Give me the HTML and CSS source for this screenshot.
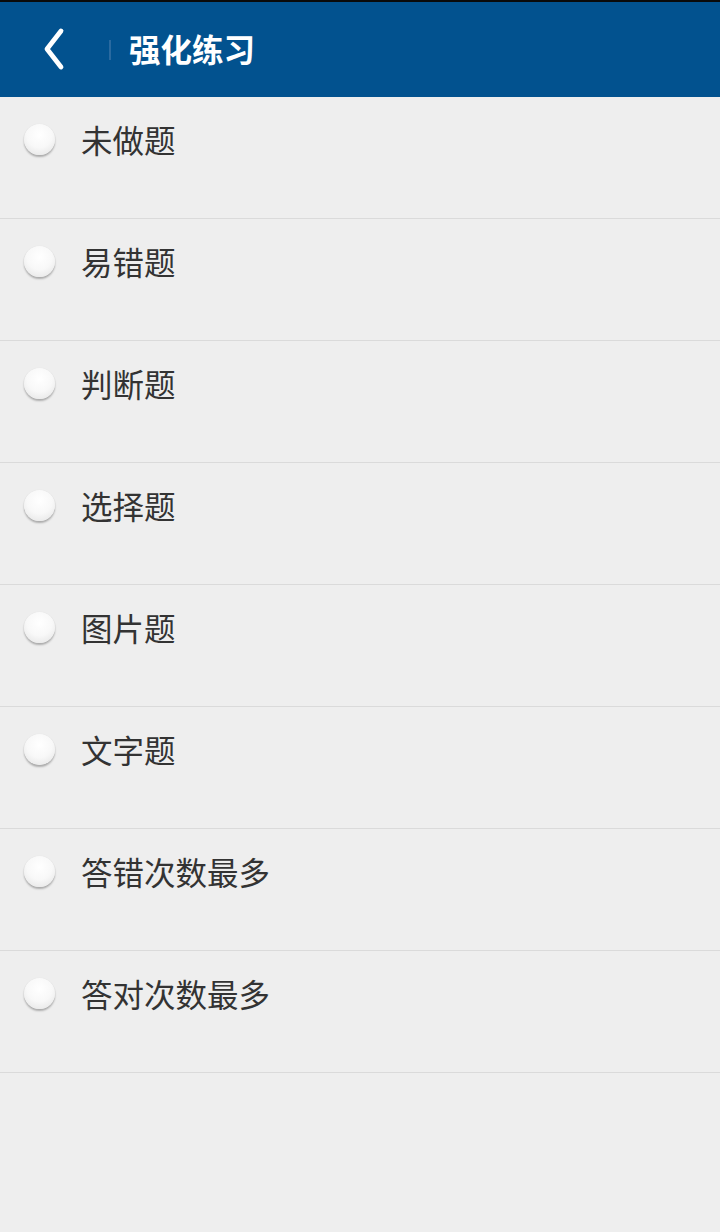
FILE: index.html
```html
<!DOCTYPE html>
<html lang="zh">
<head>
<meta charset="utf-8">
<link rel="stylesheet" href="styles.css">
</head>
<body>
<div class="app">
  <header class="bar">
    <div class="back">
      <svg width="30" height="44" viewBox="0 0 30 44"><path d="M21 4 L7 22 L21 40" fill="none" stroke="#fff" stroke-width="4.8" stroke-linecap="round" stroke-linejoin="round"/></svg>
    </div>
    <span class="sep"></span>
    <h1 class="title">强化练习</h1>
  </header>
  <ul class="list">
    <li class="row"><span class="radio"></span><span class="label">未做题</span></li>
    <li class="row"><span class="radio"></span><span class="label">易错题</span></li>
    <li class="row"><span class="radio"></span><span class="label">判断题</span></li>
    <li class="row"><span class="radio"></span><span class="label">选择题</span></li>
    <li class="row"><span class="radio"></span><span class="label">图片题</span></li>
    <li class="row"><span class="radio"></span><span class="label">文字题</span></li>
    <li class="row"><span class="radio"></span><span class="label">答错次数最多</span></li>
    <li class="row"><span class="radio"></span><span class="label">答对次数最多</span></li>
  </ul>
</div>
</body>
</html>
```
FILE: styles.css
```css
html, body {
  margin: 0;
  padding: 0;
  background: #eeeeee;
}
body {
  font-family: "Noto Sans CJK SC", "Noto Sans", sans-serif;
  width: 720px;
  height: 1232px;
  overflow: hidden;
}
.app {
  display: flex;
  flex-direction: column;
}
.bar {
  height: 95px;
  border-top: 2px solid #0a0a0a;
  background: #02528f;
  display: flex;
  align-items: center;
  box-sizing: content-box;
}
.back {
  width: 30px;
  height: 44px;
  margin-left: 40px;
  margin-top: -2px;
  display: flex;
}
.sep {
  width: 2px;
  height: 20px;
  background: #2a6aa0;
  margin-left: 39px;
}
.title {
  margin: 0 0 0 18px;
  color: #ffffff;
  font-size: 31.5px;
  font-weight: 700;
  letter-spacing: 0;
  line-height: 1;
  margin-top: -2px;
}
.list {
  list-style: none;
  margin: 0;
  padding: 0;
}
.row {
  border-bottom: 1px solid #dadada;
  display: flex;
  align-items: flex-start;
  padding-top: 27px;
  box-sizing: content-box;
  height: 94px;
}
.radio {
  width: 31px;
  height: 31px;
  border-radius: 50%;
  margin-left: 24px;
  background: radial-gradient(circle at 50% 35%, #ffffff 0%, #f8f8f8 50%, #e2e2e2 100%);
  box-shadow: 0 2px 2px rgba(0, 0, 0, 0.28), 0 0 1px rgba(0, 0, 0, 0.1);
  flex: none;
}
.label {
  margin-left: 26px;
  font-size: 31.5px;
  line-height: 31px;
  color: #333333;
}
```
